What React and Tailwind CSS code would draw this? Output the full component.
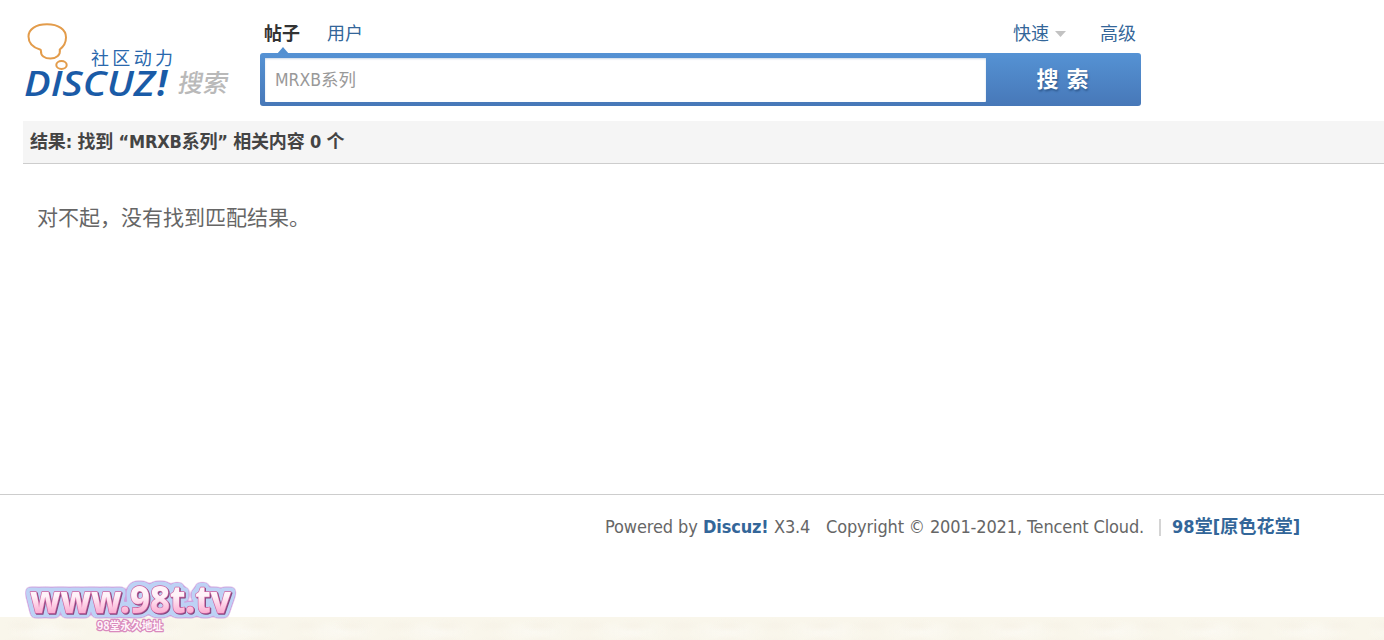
import React, { useState } from "react";

const DiscuzLogo = () => (
  <svg
    width="212"
    height="84"
    viewBox="0 0 212 84"
    role="img"
    aria-label="Discuz! 搜索"
    className="block overflow-visible"
  >
    {/* Thought bubble */}
    <g fill="none" stroke="#e39c4b" strokeWidth="2">
      <path d="M16 29.500C7.500 27 4.500 21.500 4.500 16.500C4.500 9 12 4.300 23 4.300C34.500 4.300 42 9.500 42 17.500C42 23 39 27 35.800 29.500C36.800 35 32.500 38.500 26.500 38.500C20.500 38.500 16.500 35.500 17 31C17 30.200 16.700 29.700 16 29.500Z" />
      <ellipse cx="37.500" cy="45" rx="5.200" ry="3.900" />
    </g>
    <text
      x="67"
      y="44.500"
      fontSize="18"
      fill="#2a68ad"
      textLength="82"
      className="font-['Noto_Sans_CJK_SC',sans-serif] font-normal"
    >
      社区动力
    </text>
    <text
      x="0"
      y="76"
      fontSize="35"
      fill="#1a5ba7"
      textLength="131"
      lengthAdjust="spacingAndGlyphs"
      className="font-['Open_Sans','Noto_Sans',sans-serif] font-semibold italic"
    >
      DISCUZ
    </text>
    <text
      x="133"
      y="76"
      fontSize="35"
      fill="#1a5ba7"
      className="font-['Open_Sans','Noto_Sans',sans-serif] font-bold italic"
    >
      !
    </text>
    <text
      x="0"
      y="0"
      transform="translate(153 72) skewX(-10)"
      fontSize="25"
      fill="#b9b9b9"
      textLength="50"
      className="font-['Noto_Sans_CJK_SC',sans-serif] font-medium"
    >
      搜索
    </text>
  </svg>
);

const SiteBadge = () => (
  <svg
    width="220"
    height="62"
    viewBox="0 0 220 62"
    role="img"
    aria-label="www.98t.tv"
    className="absolute bottom-[2px] left-[20px] overflow-visible"
  >
    <defs>
      <linearGradient
        id="badgeFill"
        gradientUnits="userSpaceOnUse"
        x1="0"
        y1="10"
        x2="0"
        y2="38"
      >
        <stop offset="0.35" stopColor="#fff3f9" />
        <stop offset="1" stopColor="#fba9d0" />
      </linearGradient>
      {/* Purple rim, blue halo and dark edge behind the letters */}
      <filter
        id="badgeHalo"
        filterUnits="userSpaceOnUse"
        x="-6"
        y="-6"
        width="232"
        height="66"
        colorInterpolationFilters="sRGB"
      >
        <feMorphology in="SourceAlpha" operator="dilate" radius="2" />
        <feGaussianBlur stdDeviation="2" />
        <feComponentTransfer result="rimShape">
          <feFuncA type="linear" slope="9" intercept="-0.5" />
        </feComponentTransfer>
        <feFlood floodColor="#cf9fdd" />
        <feComposite in2="rimShape" operator="in" result="rim" />
        <feMorphology in="SourceAlpha" operator="dilate" radius="2" />
        <feGaussianBlur stdDeviation="1.4" />
        <feComponentTransfer result="haloShape">
          <feFuncA type="linear" slope="8" intercept="-0.5" />
        </feComponentTransfer>
        <feFlood floodColor="#bdd2f5" />
        <feComposite in2="haloShape" operator="in" result="halo" />
        <feOffset in="SourceAlpha" dx="1" dy="0.6" result="edgeShape" />
        <feFlood floodColor="#85487f" />
        <feComposite in2="edgeShape" operator="in" result="edge" />
        <feMerge>
          <feMergeNode in="rim" />
          <feMergeNode in="halo" />
          <feMergeNode in="edge" />
          <feMergeNode in="SourceGraphic" />
        </feMerge>
      </filter>
    </defs>
    <text
      x="10"
      y="37"
      fontSize="38"
      textLength="201"
      lengthAdjust="spacingAndGlyphs"
      fill="url(#badgeFill)"
      stroke="#d0629f"
      strokeWidth="1.4"
      strokeLinejoin="round"
      paintOrder="stroke"
      filter="url(#badgeHalo)"
      className="font-['Noto_Sans',sans-serif] font-extrabold"
    >
      www.98t.tv
    </text>
    <text
      x="77"
      y="54"
      fontSize="11"
      textLength="66"
      lengthAdjust="spacingAndGlyphs"
      fill="#fff5fa"
      stroke="#d98abd"
      strokeWidth="2.5"
      strokeLinejoin="round"
      paintOrder="stroke"
      className="font-['Noto_Sans_CJK_SC',sans-serif] font-bold"
    >
      98堂永久地址
    </text>
  </svg>
);

const App = () => {
  const [keyword, setKeyword] = useState("MRXB系列");

  return (
    <div className="relative flex h-[640px] w-full flex-col overflow-hidden bg-white font-['DejaVu_Sans_Condensed','Noto_Sans_CJK_SC',sans-serif] text-[18px] text-[#666]">
      <header className="flex h-[121px] pt-[20px] pl-[24px]">
        <DiscuzLogo />

        <form
          onSubmit={(e) => e.preventDefault()}
          className="ml-[24px] w-[881px]"
        >
          {/* Tabs */}
          <div className="flex h-[33px] items-start justify-between pr-[5px] pl-[4px] leading-[27px] text-[#369]">
            <div className="flex gap-[27px]">
              <a href="#" className="relative font-bold text-[#333]">
                帖子
                <svg
                  width="12"
                  height="7"
                  viewBox="0 0 12 7"
                  className="absolute top-[27px] left-[13px]"
                >
                  <path d="M0 7L6 0L12 7Z" fill="#5390d1" />
                </svg>
              </a>
              <a href="#">用户</a>
            </div>
            <div className="flex gap-[34px]">
              <a href="#" className="flex items-center gap-[6px]">
                快速
                <svg width="11" height="6" viewBox="0 0 11 6">
                  <path d="M0 0H11L5.500 6Z" fill="#c2c2c2" />
                </svg>
              </a>
              <a href="#">高级</a>
            </div>
          </div>

          {/* Search bar */}
          <div className="flex h-[53px] rounded-[3px] bg-linear-to-b from-[#5592d4] to-[#4778b8] pt-[5px] pb-[4px] pl-[5px]">
            <input
              value={keyword}
              onChange={(e) => setKeyword(e.target.value)}
              className="h-[44px] w-[721px] rounded-[1px] bg-white px-[10px] pb-[3px] text-[17.5px] text-[#999] shadow-[inset_0_1px_2px_#cbd8e8] outline-none"
            />
            <button className="-mt-[1px] w-[155px] pl-[6px] text-[22px] leading-[42px] font-bold tracking-[8px] text-white [text-shadow:1px_2px_2px_#315c91]">
              搜索
            </button>
          </div>
        </form>
      </header>

      <main className="flex h-[373px] flex-col pl-[23px]">
        <h2 className="h-[43px] border-b border-[#cdcdcd] bg-[#f5f5f5] pl-[7px] leading-[41px] font-bold tracking-[-0.18px] text-[#444]">
          结果: 找到 <span>“MRXB系列”</span> 相关内容 0 个
        </h2>
        <p className="pt-[38px] pl-[14px] text-[21px] leading-[32px]">
          对不起，没有找到匹配结果。
        </p>
      </main>

      <footer className="flex h-[123px] items-start justify-end border-t border-[#cdcdcd] pt-[18px] pr-[83px] leading-[27px] whitespace-nowrap">
        <p className="w-[98px] tracking-[-0.1px]">Powered by</p>
        <p className="w-[71px] font-bold tracking-[-0.15px] text-[#369]">
          Discuz!
        </p>
        <p className="w-[52px] tracking-[-0.2px]">X3.4</p>
        <p className="w-[333px] tracking-[-0.14px]">
          Copyright © 2001-2021, Tencent Cloud.
        </p>
        <span className="mt-[6px] mr-[11px] h-[17px] w-[2px] bg-[#d4d4d4]" />
        <a href="#" className="w-[129px] font-bold tracking-[0.1px] text-[#369]">
          98堂[原色花堂]
        </a>
      </footer>

      {/* Paper strip along the bottom edge */}
      <div className="grow bg-[#f9f6eb] bg-[radial-gradient(ellipse_at_center,#f7f3e8_0,transparent_60%),radial-gradient(ellipse_at_center,#fbf9f2_0,transparent_60%)] bg-[length:47px_17px,97px_29px]" />
      <SiteBadge />
    </div>
  );
};

export default App;
